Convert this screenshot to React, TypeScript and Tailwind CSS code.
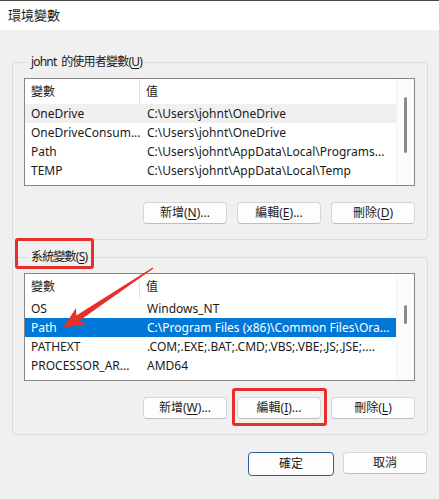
import React from "react";

type Row = { name: string; value: string; state?: "hover" | "selected" };

const userVars: Row[] = [
  { name: "OneDrive", value: "C:\\Users\\johnt\\OneDrive", state: "hover" },
  { name: "OneDriveConsum...", value: "C:\\Users\\johnt\\OneDrive" },
  { name: "Path", value: "C:\\Users\\johnt\\AppData\\Local\\Programs..." },
  { name: "TEMP", value: "C:\\Users\\johnt\\AppData\\Local\\Temp" },
];

const sysVars: Row[] = [
  { name: "OS", value: "Windows_NT" },
  { name: "Path", value: "C:\\Program Files (x86)\\Common Files\\Ora...", state: "selected" },
  { name: "PATHEXT", value: ".COM;.EXE;.BAT;.CMD;.VBS;.VBE;.JS;.JSE;...." },
  { name: "PROCESSOR_AR...", value: "AMD64" },
];

function Mnemonic({ text, letter, tail = "" }: { text: string; letter: string; tail?: string }) {
  return (
    <span>
      {text}(<span className="underline underline-offset-2">{letter}</span>){tail}
    </span>
  );
}

function VarList({ rows, thumbTop, thumbHeight }: { rows: Row[]; thumbTop: number; thumbHeight: number }) {
  return (
    <div className="w-[391px] h-[108px] bg-white border border-[#868686] flex overflow-hidden">
      <div className="flex-1 flex flex-col">
        <div className="h-[25px] flex shrink-0">
          <div className="w-[115px] pl-[6px] flex items-center border-r border-[#e5e5e5]">變數</div>
          <div className="flex-1 pl-[6px] flex items-center">值</div>
        </div>
        {rows.map((r) => (
          <div
            key={r.name}
            className={
              r.state === "selected"
                ? "h-[19px] shrink-0 flex items-center bg-[#0078d7] text-white"
                : r.state === "hover"
                ? "h-[19px] shrink-0 flex items-center bg-[#f0f0f0]"
                : "h-[19px] shrink-0 flex items-center"
            }
          >
            <div className="w-[116px] pl-[6px] whitespace-nowrap overflow-hidden">{r.name}</div>
            <div className="flex-1 pl-[6px] whitespace-nowrap overflow-hidden">{r.value}</div>
          </div>
        ))}
      </div>
      <div className="w-[18px] border-l border-[#f3f3f3] bg-[#fcfcfc] flex justify-center">
        <div className="w-[3px]">
          <div style={{ height: thumbTop }} />
          <div className="w-[3px] rounded-full bg-[#8a8a8a]" style={{ height: thumbHeight }} />
        </div>
      </div>
    </div>
  );
}

function Btn({ children, primary }: { children: React.ReactNode; primary?: boolean }) {
  return (
    <button
      className={
        primary
          ? "w-[86px] h-[24px] rounded-[4px] bg-[#fdfdfd] border border-[#2f5f94] text-[#1a1a1a] flex items-center justify-center"
          : "w-[84px] h-[22px] rounded-[4px] bg-[#fdfdfd] border border-[#d5d5d5] border-b-[#bdbdbd] text-[#1a1a1a] flex items-center justify-center"
      }
    >
      {children}
    </button>
  );
}

function Group({
  legend,
  children,
  buttons,
}: {
  legend: React.ReactNode;
  children: React.ReactNode;
  buttons: React.ReactNode;
}) {
  return (
    <fieldset className="w-[416px] border border-[#dcdcdc] rounded-[3px] px-[11px] pb-[15px]">
      <legend className="ml-[5px] px-[2px] h-[16px] leading-[16px] tracking-[-0.8px]">{legend}</legend>
      <div className="pt-[8px]">{children}</div>
      <div className="flex justify-end gap-[10px] pr-[1px] mt-[16px]">{buttons}</div>
    </fieldset>
  );
}

export default function App() {
  const tail = { x: 153, y: 268 };
  const tip = { x: 63, y: 328 };
  const dx = tip.x - tail.x;
  const dy = tip.y - tail.y;
  const len = Math.hypot(dx, dy);
  const u = { x: dx / len, y: dy / len };
  const n = { x: -u.y, y: u.x };
  const base = { x: tip.x - 22 * u.x, y: tip.y - 22 * u.y };
  const neck = { x: base.x + 4 * u.x, y: base.y + 4 * u.y };
  const pts = [
    [tail.x + 0.6 * n.x, tail.y + 0.6 * n.y],
    [neck.x + 3 * n.x, neck.y + 3 * n.y],
    [base.x + 9.5 * n.x, base.y + 9.5 * n.y],
    [tip.x, tip.y],
    [base.x - 9.5 * n.x, base.y - 9.5 * n.y],
    [neck.x - 3 * n.x, neck.y - 3 * n.y],
    [tail.x - 0.6 * n.x, tail.y - 0.6 * n.y],
  ]
    .map((p) => p.join(","))
    .join(" ");

  return (
    <div
      className="relative w-[439px] h-[499px] bg-[#f0f0f0] overflow-hidden text-[12px] text-[#1a1a1a] flex flex-col"
      style={{ fontFamily: '"Noto Sans", "Noto Sans CJK TC", sans-serif' }}
    >
      <div className="h-[30px] shrink-0 bg-white border-t border-[#4a4a4a] flex items-center pl-[8px] text-[13px]">
        環境變數
      </div>

      <div className="flex flex-col pl-[12px] pt-[24px]">
        <Group
          legend={<Mnemonic text={"johnt\u00a0\u00a0的使用者變數"} letter="U" />}
          buttons={
            <>
              <Btn><Mnemonic text="新增" letter="N" tail="..." /></Btn>
              <Btn><Mnemonic text="編輯" letter="E" tail="..." /></Btn>
              <Btn><Mnemonic text="刪除" letter="D" /></Btn>
            </>
          }
        >
          <VarList rows={userVars} thumbTop={18} thumbHeight={56} />
        </Group>

        <div className="h-[9px]" />

        <Group
          legend={<Mnemonic text="系統變數" letter="S" />}
          buttons={
            <>
              <Btn><Mnemonic text="新增" letter="W" tail="..." /></Btn>
              <Btn><Mnemonic text="編輯" letter="I" tail="..." /></Btn>
              <Btn><Mnemonic text="刪除" letter="L" /></Btn>
            </>
          }
        >
          <VarList rows={sysVars} thumbTop={31} thumbHeight={19} />
        </Group>

        <div className="flex justify-end gap-[9px] pr-[12px] mt-[17px]">
          <Btn primary>確定</Btn>
          <Btn primary={false}>
            <span>取消</span>
          </Btn>
        </div>
      </div>

      {/* annotations */}
      <div className="absolute left-[15px] top-[238px] w-[79px] h-[31px] border-[3px] border-[#e8302a] rounded-[3px]" />
      <div className="absolute left-[232px] top-[388px] w-[95px] h-[38px] border-[3px] border-[#e8302a] rounded-[3px]" />
      <svg className="absolute left-0 top-0" width="439" height="499" viewBox="0 0 439 499">
        <polygon points={pts} fill="#e8302a" />
      </svg>
    </div>
  );
}
